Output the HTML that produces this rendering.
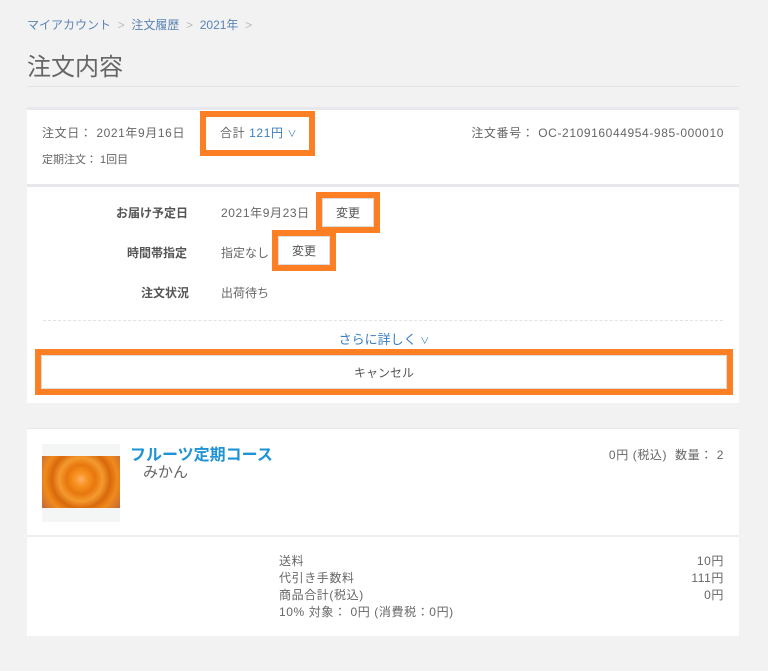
<!DOCTYPE html>
<html><head><meta charset="utf-8"><style>
body{margin:0;width:768px;height:671px;background:#f2f2f2;font-family:"Liberation Sans","Noto Sans CJK JP",sans-serif;color:#666;position:relative;overflow:hidden}
.a{position:absolute;white-space:nowrap}
.card{position:absolute;left:27px;width:712px;background:#fff}
.ob{position:absolute;border:6px solid #fd7f23;box-sizing:border-box}
.btn{position:absolute;background:#fff;border:1px solid #ddd;box-sizing:border-box;font-size:12px;color:#555;text-align:center}
.ls{letter-spacing:0.6px}
</style></head><body>
<div class="a" style="left:27px;top:16px;font-size:12px;color:#5a84b4">マイアカウント <span style="color:#bbb">&nbsp;&gt;&nbsp;</span> 注文履歴 <span style="color:#bbb">&nbsp;&gt;&nbsp;</span> 2021年 <span style="color:#bbb">&nbsp;&gt;</span></div>
<div class="a" style="left:27px;top:47px;font-size:24px;color:#666">注文内容</div>
<div class="a" style="left:27px;top:86px;width:712px;height:1px;background:#e4e4e4"></div>

<div class="card" style="top:107px;height:77px;border-top:3px solid #e6e8ec;box-sizing:border-box"></div>
<div class="a ls" style="left:42px;top:124px;font-size:12px">注文日： 2021年9月16日</div>
<div class="a" style="left:42px;top:151px;font-size:11px">定期注文： 1回目</div>
<div class="ob" style="left:200px;top:111px;width:115px;height:45px"></div>
<div class="a ls" style="left:220px;top:124px;font-size:12px">合計 <span style="color:#3a7fc1">121円 <span style="font-size:9px">∨</span></span></div>
<div class="a ls" style="right:44px;top:124px;font-size:12px">注文番号： OC-210916044954-985-000010</div>

<div class="card" style="top:184px;height:219px;border-top:3px solid #e6e8ec;box-sizing:border-box"></div>
<div class="a" style="left:116px;top:204px;font-size:12px;font-weight:bold;color:#555">お届け予定日</div>
<div class="a ls" style="left:221px;top:204px;font-size:12px">2021年9月23日</div>
<div class="a" style="left:127px;top:244px;font-size:12px;font-weight:bold;color:#555">時間帯指定</div>
<div class="a" style="left:221px;top:244px;font-size:12px">指定なし</div>
<div class="a" style="left:141px;top:284px;font-size:12px;font-weight:bold;color:#555">注文状況</div>
<div class="a" style="left:221px;top:284px;font-size:12px">出荷待ち</div>
<div class="ob" style="left:316px;top:192px;width:64px;height:41px"></div>
<div class="btn" style="left:322px;top:198px;width:52px;height:29px;line-height:29px">変更</div>
<div class="ob" style="left:272px;top:230px;width:64px;height:41px"></div>
<div class="btn" style="left:278px;top:236px;width:52px;height:29px;line-height:29px">変更</div>
<div class="a" style="left:43px;top:320px;width:680px;border-top:1px dashed #e2e2e2"></div>
<div class="a" style="left:0;width:768px;text-align:center;top:329px;font-size:13px;color:#3a7fc1">さらに詳しく <span style="font-size:9px">∨</span></div>
<div class="ob" style="left:35px;top:349px;width:698px;height:46px"></div>
<div class="btn" style="left:41px;top:355px;width:686px;height:34px;line-height:34px">キャンセル</div>

<div class="card" style="top:428px;height:208px;border-top:1px solid #e6e8ec;box-sizing:border-box"></div>
<div class="a" style="left:27px;top:535px;width:712px;height:2px;background:#eee"></div>
<div class="a" style="left:42px;top:444px;width:78px;height:78px;background:#f4f6f6"></div>
<div class="a" style="left:42px;top:456px;width:78px;height:52px;background:radial-gradient(circle at 50% 45%,#ffb066 0,#f7921f 14%,#e8770e 30%,#f49a2e 45%,#d8690b 60%,#f08a1c 75%,#c1683a 100%)"></div>
<div class="a" style="left:130px;top:441px;font-size:16px;font-weight:bold;color:#1f93d6">フルーツ定期コース</div>
<div class="a" style="left:143px;top:461px;font-size:15px;color:#666">みかん</div>
<div class="a ls" style="right:44px;top:446px;font-size:12px">0円 (税込) &nbsp;数量： 2</div>
<div class="a ls" style="left:279px;top:553px;font-size:12px;line-height:17px">送料<br>代引き手数料<br>商品合計(税込)<br>10% 対象： 0円 (消費税：0円)</div>
<div class="a ls" style="left:600px;width:124px;text-align:right;top:553px;font-size:12px;line-height:17px">10円<br>111円<br>0円</div>
</body></html>
